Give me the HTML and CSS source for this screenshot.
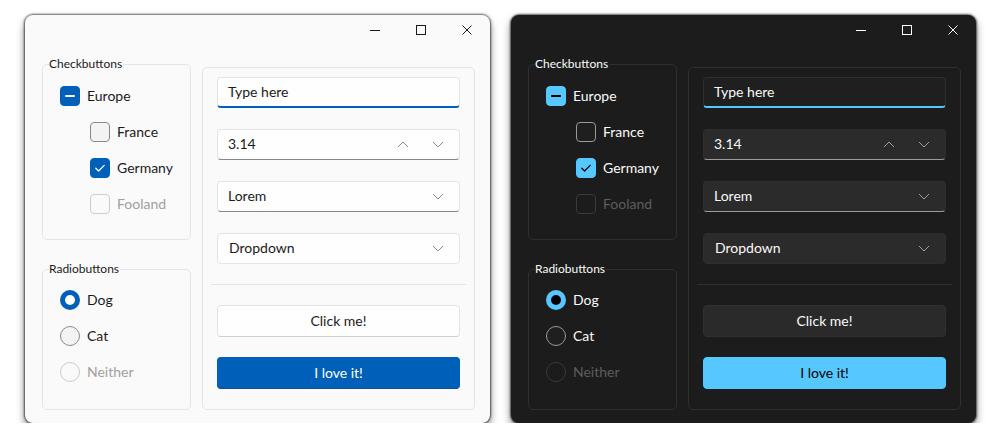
FILE: index.html
```html
<!DOCTYPE html>
<html>
<head>
<meta charset="utf-8">
<link rel="stylesheet" href="styles.css">
</head>
<body>
<div class="stage">

  <div class="win light">
    <div class="titlebar">
      <div class="tbtn"><svg width="10" height="10" viewBox="0 0 10 10"><path d="M0 5.5H10" /></svg></div>
      <div class="tbtn"><svg width="10" height="10" viewBox="0 0 10 10"><rect x="0.5" y="0.5" width="9" height="9" /></svg></div>
      <div class="tbtn"><svg width="10" height="10" viewBox="0 0 10 10"><path d="M0.5 0.5L9.5 9.5M9.5 0.5L0.5 9.5" /></svg></div>
    </div>
    <div class="content">
      <div class="leftcol">
        <fieldset class="group checks">
          <legend>Checkbuttons</legend>
          <div class="row"><span class="cb on"><svg width="20" height="20" viewBox="0 0 20 20"><path d="M6 10H14" class="mark"/></svg></span><span class="lbl">Europe</span></div>
          <div class="row sub"><span class="cb"></span><span class="lbl">France</span></div>
          <div class="row sub"><span class="cb on"><svg width="20" height="20" viewBox="0 0 20 20"><path d="M5.8 10.3L8.6 13L14.2 7.4" class="mark thin"/></svg></span><span class="lbl">Germany</span></div>
          <div class="row sub dis"><span class="cb"></span><span class="lbl">Fooland</span></div>
        </fieldset>
        <fieldset class="group radios">
          <legend>Radiobuttons</legend>
          <div class="row"><span class="rb on"></span><span class="lbl">Dog</span></div>
          <div class="row"><span class="rb"></span><span class="lbl">Cat</span></div>
          <div class="row dis"><span class="rb"></span><span class="lbl">Neither</span></div>
        </fieldset>
      </div>
      <div class="panel">
        <div class="field entry"><span>Type here</span></div>
        <div class="field spin"><span>3.14</span>
          <svg class="chev up" width="12" height="7" viewBox="0 0 12 7"><path d="M1 6L6 1L11 6"/></svg>
          <svg class="chev" width="12" height="7" viewBox="0 0 12 7"><path d="M1 1L6 6L11 1"/></svg>
        </div>
        <div class="field combo"><span>Lorem</span>
          <svg class="chev" width="12" height="7" viewBox="0 0 12 7"><path d="M1 1L6 6L11 1"/></svg>
        </div>
        <div class="field drop"><span>Dropdown</span>
          <svg class="chev" width="12" height="7" viewBox="0 0 12 7"><path d="M1 1L6 6L11 1"/></svg>
        </div>
        <div class="sep"></div>
        <div class="btn"><span>Click me!</span></div>
        <div class="btn accent"><span>I love it!</span></div>
      </div>
    </div>
  </div>

  <div class="win dark">
    <div class="titlebar">
      <div class="tbtn"><svg width="10" height="10" viewBox="0 0 10 10"><path d="M0 5.5H10" /></svg></div>
      <div class="tbtn"><svg width="10" height="10" viewBox="0 0 10 10"><rect x="0.5" y="0.5" width="9" height="9" /></svg></div>
      <div class="tbtn"><svg width="10" height="10" viewBox="0 0 10 10"><path d="M0.5 0.5L9.5 9.5M9.5 0.5L0.5 9.5" /></svg></div>
    </div>
    <div class="content">
      <div class="leftcol">
        <fieldset class="group checks">
          <legend>Checkbuttons</legend>
          <div class="row"><span class="cb on"><svg width="20" height="20" viewBox="0 0 20 20"><path d="M6 10H14" class="mark"/></svg></span><span class="lbl">Europe</span></div>
          <div class="row sub"><span class="cb"></span><span class="lbl">France</span></div>
          <div class="row sub"><span class="cb on"><svg width="20" height="20" viewBox="0 0 20 20"><path d="M5.8 10.3L8.6 13L14.2 7.4" class="mark thin"/></svg></span><span class="lbl">Germany</span></div>
          <div class="row sub dis"><span class="cb"></span><span class="lbl">Fooland</span></div>
        </fieldset>
        <fieldset class="group radios">
          <legend>Radiobuttons</legend>
          <div class="row"><span class="rb on"></span><span class="lbl">Dog</span></div>
          <div class="row"><span class="rb"></span><span class="lbl">Cat</span></div>
          <div class="row dis"><span class="rb"></span><span class="lbl">Neither</span></div>
        </fieldset>
      </div>
      <div class="panel">
        <div class="field entry"><span>Type here</span></div>
        <div class="field spin"><span>3.14</span>
          <svg class="chev up" width="12" height="7" viewBox="0 0 12 7"><path d="M1 6L6 1L11 6"/></svg>
          <svg class="chev" width="12" height="7" viewBox="0 0 12 7"><path d="M1 1L6 6L11 1"/></svg>
        </div>
        <div class="field combo"><span>Lorem</span>
          <svg class="chev" width="12" height="7" viewBox="0 0 12 7"><path d="M1 1L6 6L11 1"/></svg>
        </div>
        <div class="field drop"><span>Dropdown</span>
          <svg class="chev" width="12" height="7" viewBox="0 0 12 7"><path d="M1 1L6 6L11 1"/></svg>
        </div>
        <div class="sep"></div>
        <div class="btn"><span>Click me!</span></div>
        <div class="btn accent"><span>I love it!</span></div>
      </div>
    </div>
  </div>

</div>
</body>
</html>
```
FILE: styles.css
```css
* { box-sizing: border-box; }
html, body { margin: 0; padding: 0; background: #ffffff; }
body { font-family: Lato, "Open Sans", "Liberation Sans", sans-serif; font-size: 14px; }

.stage {
  display: flex;
  gap: 21px;
  padding: 15px 0 0 25px;
}

.win {
  --bg: #fafafa;
  --fg: #1b1b1b;
  --dis: #a0a0a0;
  --frame: #e5e5e5;
  --accent: #005fb8;
  --on-accent: #ffffff;
  --field-bg: #fefefe;
  --field-bd: #e5e5e5;
  --field-bot: #868686;
  --chev: #8d8d8d;
  --box-bg: #f3f3f3;
  --box-bd: #8b8b8b;
  --box-dis: #cdcdcd;
  --btn-bg: #fefefe;
  --btn-bd: #e3e3e3;
  --btn-bot: #cfcfcf;
  --icon: #1b1b1b;
  width: 465px;
  height: 408px;
  border-radius: 8px;
  background: var(--bg);
  color: var(--fg);
  box-shadow: 0 0 2px 1px rgba(0,0,0,0.6), 0 5px 8px rgba(0,0,0,0.5);
  display: flex;
  flex-direction: column;
}
.win.dark {
  --bg: #1c1c1c;
  --fg: #fafafa;
  --dis: #5d5d5d;
  --frame: #2f2f2f;
  --accent: #57c8ff;
  --on-accent: #000000;
  --field-bg: #1f1f1f;
  --field-bd: #2e2e2e;
  --field-bot: #9a9a9a;
  --chev: #9e9e9e;
  --box-bg: #1f1f1f;
  --box-bd: #9a9a9a;
  --box-dis: #3a3a3a;
  --btn-bg: #2a2a2a;
  --btn-bd: #303030;
  --btn-bot: #303030;
  --icon: #ffffff;
}
.win.dark .spin, .win.dark .combo, .win.dark .drop { background: #2b2b2b; }

.titlebar {
  height: 30px;
  display: flex;
  justify-content: flex-end;
}
.tbtn {
  width: 46px;
  height: 30px;
  display: flex;
  align-items: center;
  justify-content: center;
}
.tbtn svg { fill: none; stroke: var(--icon); stroke-width: 1; }

.content {
  flex: 1;
  display: flex;
  gap: 11px;
  padding: 11px 15px 15px 17px;
}

.leftcol {
  width: 149px;
  display: flex;
  flex-direction: column;
  gap: 21px;
}

.group {
  margin: 0;
  border: 1px solid var(--frame);
  border-radius: 5px;
  padding: 0 0 17px 6px;
  min-width: 0;
}
.group legend {
  font-size: 12px;
  line-height: 16px;
  padding: 0 1px 0 0;
  margin-left: 0;
}
.checks { padding-top: 6px; }
.radios { padding-top: 5px; flex: 1; }

.row {
  height: 36px;
  display: flex;
  align-items: center;
  gap: 7px;
  padding-left: 11px;
}
.row.sub { padding-left: 41px; }
.row.dis .lbl { color: var(--dis); }
.lbl, .field span, .btn span { padding-bottom: 2px; }

.cb {
  width: 20px;
  height: 20px;
  border-radius: 4px;
  border: 1px solid var(--box-bd);
  background: var(--box-bg);
  display: block;
  flex: none;
}
.cb.on { background: var(--accent); border-color: var(--accent); }
.cb svg { display: block; margin: -1px; }
.cb .mark { fill: none; stroke: var(--on-accent); stroke-width: 2; stroke-linecap: round; stroke-linejoin: round; }
.cb .mark.thin { stroke-width: 1.3; }
.row.dis .cb { border-color: var(--box-dis); background: transparent; }

.rb {
  width: 20px;
  height: 20px;
  border-radius: 50%;
  border: 1px solid var(--box-bd);
  background: var(--box-bg);
  flex: none;
}
.rb.on { border: 5px solid var(--accent); background: var(--bg); }
.win.light .rb.on { background: #ffffff; }
.win.dark .rb.on { background: #000000; }
.row.dis .rb { border-color: var(--box-dis); background: transparent; }

.panel {
  flex: 1;
  margin-top: 11px;
  border: 1px solid var(--frame);
  border-radius: 5px;
  padding: 9px 14px 0 14px;
  display: flex;
  flex-direction: column;
}

.field {
  height: 31px;
  border: 1px solid var(--field-bd);
  border-radius: 4px;
  background: var(--field-bg);
  display: flex;
  align-items: center;
  padding: 0 0 0 10px;
  margin-bottom: 21px;
}
.field span { flex: 1; }
.entry { border-bottom: 2px solid var(--accent); }
.spin, .combo { border-bottom-color: var(--field-bot); }
.chev { fill: none; stroke: var(--chev); stroke-width: 1; margin-right: 15px; flex: none; }
.chev.up { margin-right: 23px; }
.drop span { padding-left: 1px; }

.sep {
  height: 1px;
  background: var(--frame);
  margin: -1px -6px 20px -6px;
}

.btn {
  height: 32px;
  border: 1px solid var(--btn-bd);
  border-bottom-color: var(--btn-bot);
  border-radius: 4px;
  background: var(--btn-bg);
  display: flex;
  align-items: center;
  justify-content: center;
  margin-bottom: 20px;
}
.btn.accent {
  background: var(--accent);
  border-color: var(--accent);
  color: var(--on-accent);
}
.win.light .btn.accent { border-bottom-color: #0a4f93; }
```
